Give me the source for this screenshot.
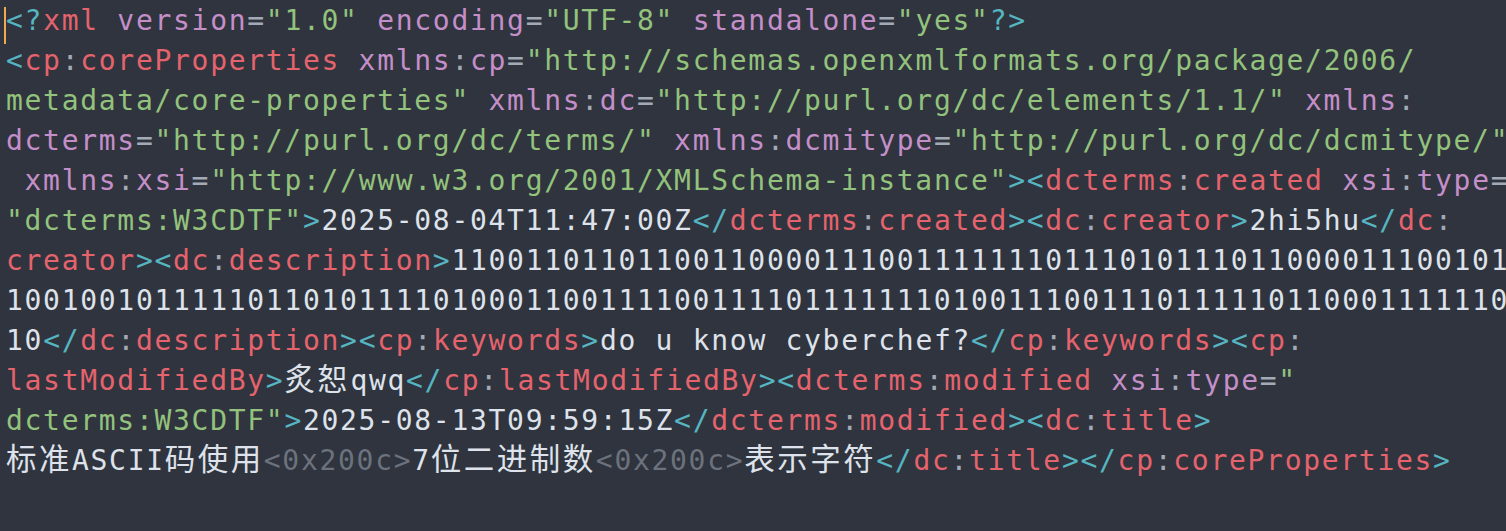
import React from "react";

type Tok = [string, string];

// token colours for the xml highlighter
const tone: Record<string, string> = {
  b: "text-[#56b5c1]",
  t: "text-[#e5636d]",
  p: "text-[#a3aab6]",
  a: "text-[#c48fc9]",
  s: "text-[#93c27d]",
  x: "text-[#dee2ea]",
  g: "text-[#6c727d]",
  c: "text-[#dee2ea] text-[30.5px] leading-none tracking-[2.5px] font-['Noto_Sans_CJK_SC',sans-serif]",
  w: "",
};

const lines: Tok[][] = [
  [["b", "<?"], ["t", "xml"], ["a", " version"], ["p", "="], ["s", '"1.0"'], ["a", " encoding"], ["p", "="], ["s", '"UTF-8"'], ["a", " standalone"], ["p", "="], ["s", '"yes"'], ["b", "?>"]],
  [["b", "<"], ["t", "cp"], ["p", ":"], ["t", "coreProperties"], ["a", " xmlns"], ["p", ":"], ["a", "cp"], ["p", "="], ["s", '"http://schemas.openxmlformats.org/package/2006/']],
  [["s", 'metadata/core-properties"'], ["a", " xmlns"], ["p", ":"], ["a", "dc"], ["p", "="], ["s", '"http://purl.org/dc/elements/1.1/"'], ["a", " xmlns"], ["p", ":"]],
  [["a", "dcterms"], ["p", "="], ["s", '"http://purl.org/dc/terms/"'], ["a", " xmlns"], ["p", ":"], ["a", "dcmitype"], ["p", "="], ["s", '"http://purl.org/dc/dcmitype/"']],
  [["a", " xmlns"], ["p", ":"], ["a", "xsi"], ["p", "="], ["s", '"http://www.w3.org/2001/XMLSchema-instance"'], ["b", "><"], ["t", "dcterms"], ["p", ":"], ["t", "created"], ["a", " xsi"], ["p", ":"], ["a", "type"], ["p", "="]],
  [["s", '"dcterms:W3CDTF"'], ["b", ">"], ["x", "2025-08-04T11:47:00Z"], ["b", "</"], ["t", "dcterms"], ["p", ":"], ["t", "created"], ["b", "><"], ["t", "dc"], ["p", ":"], ["t", "creator"], ["b", ">"], ["x", "2hi5hu"], ["b", "</"], ["t", "dc"], ["p", ":"]],
  [["t", "creator"], ["b", "><"], ["t", "dc"], ["p", ":"], ["t", "description"], ["b", ">"], ["x", "110011011011001100001110011111110111010111011000011100101"]],
  [["x", "100100101111101101011110100011001111001111011111110100111001110111110110001111110"]],
  [["x", "10"], ["b", "</"], ["t", "dc"], ["p", ":"], ["t", "description"], ["b", "><"], ["t", "cp"], ["p", ":"], ["t", "keywords"], ["b", ">"], ["x", "do u know cyberchef?"], ["b", "</"], ["t", "cp"], ["p", ":"], ["t", "keywords"], ["b", "><"], ["t", "cp"], ["p", ":"]],
  [["t", "lastModifiedBy"], ["b", ">"], ["c", "炙恕"], ["x", "qwq"], ["b", "</"], ["t", "cp"], ["p", ":"], ["t", "lastModifiedBy"], ["b", "><"], ["t", "dcterms"], ["p", ":"], ["t", "modified"], ["a", " xsi"], ["p", ":"], ["a", "type"], ["p", "="], ["s", '"']],
  [["s", 'dcterms:W3CDTF"'], ["b", ">"], ["x", "2025-08-13T09:59:15Z"], ["b", "</"], ["t", "dcterms"], ["p", ":"], ["t", "modified"], ["b", "><"], ["t", "dc"], ["p", ":"], ["t", "title"], ["b", ">"]],
  [["c", "标准"], ["x", "ASCII"], ["c", "码使用"], ["g", "<0x200c>"], ["x", "7"], ["c", "位二进制数"], ["g", "<0x200c>"], ["c", "表示字符"], ["b", "</"], ["t", "dc"], ["p", ":"], ["t", "title"], ["b", "></"], ["t", "cp"], ["p", ":"], ["t", "coreProperties"], ["b", ">"]],
];

export default function App() {
  return (
    <div className="relative w-[1506px] h-[531px] overflow-hidden bg-[#2f343e] pl-[6px] pt-[1px] font-['DejaVu_Sans_Mono','Noto_Sans_CJK_SC',monospace] text-[28px] tracking-[1.7px]">
      {/* caret */}
      <div className="absolute left-[4px] top-[7px] w-[2px] h-[37px] bg-[#efa84e]" />
      {lines.map((line, i) => (
        <div key={i} className="h-[40px] leading-[40px] whitespace-pre">
          {line.map(([k, text], j) => (
            <span key={j} className={tone[k]}>
              {text}
            </span>
          ))}
        </div>
      ))}
    </div>
  );
}
